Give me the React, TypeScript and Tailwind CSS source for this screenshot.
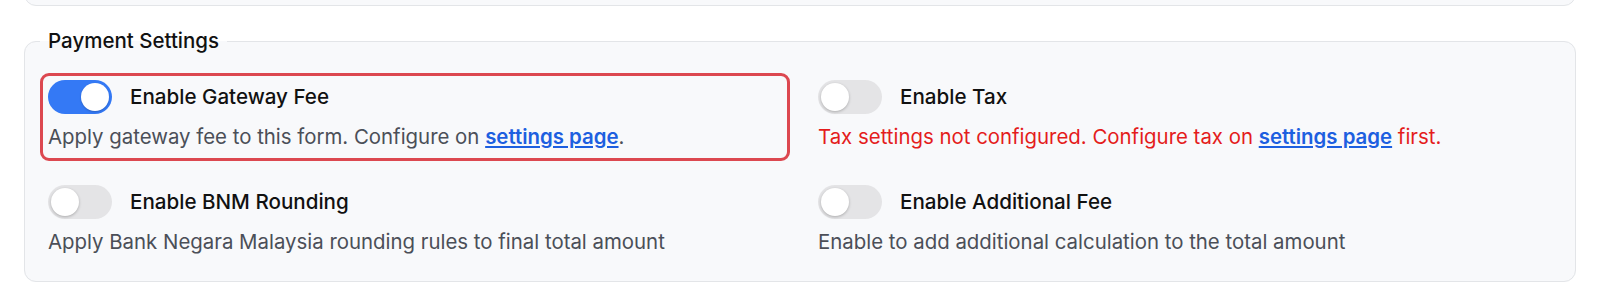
import React from "react";

function Toggle({ on }: { on: boolean }) {
  return (
    <div
      className={
        on
          ? "relative h-[34px] w-[64px] shrink-0 rounded-full bg-[#3479f5]"
          : "relative h-[34px] w-[64px] shrink-0 rounded-full bg-[#e4e4e6]"
      }
    >
      <div
        className={
          on
            ? "absolute right-[3px] top-[3px] h-[28px] w-[28px] rounded-full bg-white shadow-[0_1px_2px_rgba(0,0,0,0.2)]"
            : "absolute left-[3px] top-[3px] h-[28px] w-[28px] rounded-full bg-white shadow-[0_1px_3px_rgba(0,0,0,0.25)]"
        }
      />
    </div>
  );
}

function Item({
  on,
  title,
  highlight,
  children,
}: {
  on: boolean;
  title: string;
  highlight?: boolean;
  children: React.ReactNode;
}) {
  return (
    <div
      className={
        highlight
          ? "rounded-[9px] border-[3px] border-[#dc4850] px-[5px] pb-[7px] pt-[4px]"
          : "rounded-[9px] border-[3px] border-transparent px-[5px] pb-[7px] pt-[4px]"
      }
    >
      <div className="flex items-center gap-[18px]">
        <Toggle on={on} />
        <span className="text-[20.6px] font-medium leading-[28px] text-[#111]">{title}</span>
      </div>
      <div className="mt-[9px] text-[20.4px] leading-[28px]">{children}</div>
    </div>
  );
}

export default function App() {
  return (
    <div
      className="h-[305px] w-[1600px] overflow-hidden bg-white"
      style={{ fontFamily: "Inter, 'Noto Sans', sans-serif" }}
    >
      <div className="mx-[24px] mt-[-34px] h-[40px] rounded-xl border border-[#e3e5e8] bg-[#f8f9fb]" />
      <fieldset className="mx-[24px] mt-[21px] rounded-xl border border-[#e3e5e8] bg-[#f8f9fb] px-[15px] pb-[15px] pt-[18px]">
        <legend className="px-[8px] text-[20.5px] font-medium leading-[28px] text-[#111]">Payment Settings</legend>
        <div className="grid grid-cols-2 gap-x-[20px] gap-y-[17px]">
          <Item on title="Enable Gateway Fee" highlight>
            <span className="text-[#4b4f58]">
              Apply gateway fee to this form. Configure on{" "}
              <a className="font-semibold text-[#1d5fe0] underline underline-offset-2">settings page</a>.
            </span>
          </Item>
          <Item on={false} title="Enable Tax">
            <span className="text-[#e41c1c]">
              Tax settings not configured. Configure tax on{" "}
              <a className="font-semibold text-[#1d5fe0] underline underline-offset-2">settings page</a> first.
            </span>
          </Item>
          <Item on={false} title="Enable BNM Rounding">
            <span className="text-[#4b4f58]">Apply Bank Negara Malaysia rounding rules to final total amount</span>
          </Item>
          <Item on={false} title="Enable Additional Fee">
            <span className="text-[#4b4f58]">Enable to add additional calculation to the total amount</span>
          </Item>
        </div>
      </fieldset>
    </div>
  );
}
